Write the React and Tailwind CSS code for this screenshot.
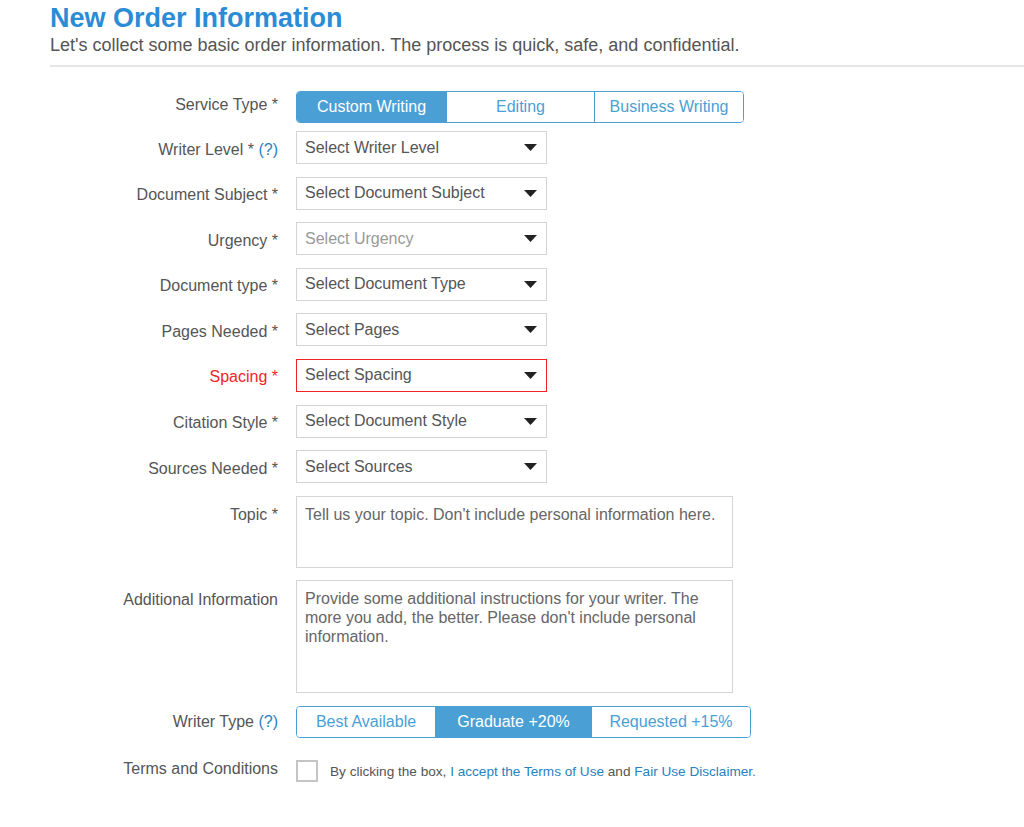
import { useState } from 'react';

const selects = [
  { label: 'Writer Level *', help: true, placeholder: 'Select Writer Level' },
  { label: 'Document Subject *', placeholder: 'Select Document Subject' },
  { label: 'Urgency *', placeholder: 'Select Urgency', muted: true },
  { label: 'Document type *', placeholder: 'Select Document Type' },
  { label: 'Pages Needed *', placeholder: 'Select Pages' },
  { label: 'Spacing *', placeholder: 'Select Spacing', error: true },
  { label: 'Citation Style *', placeholder: 'Select Document Style' },
  { label: 'Sources Needed *', placeholder: 'Select Sources' },
];

function Caret() {
  return (
    <svg width="13" height="7" viewBox="0 0 13 7" className="shrink-0">
      <path d="M0 0 H13 L6.5 7 Z" fill="#222" />
    </svg>
  );
}

function Help() {
  return <span className="text-[#2a7fc0]">(?)</span>;
}

function Row({ label, children, className = '', labelClass = 'items-center' }) {
  return (
    <div className={`flex ${className}`}>
      <div className={`w-[228px] shrink-0 flex justify-end text-right ${labelClass}`}>{label}</div>
      <div className="ml-[18px]">{children}</div>
    </div>
  );
}

function Segmented({ options, active, widths, onChange }) {
  return (
    <div className="flex border border-[#4a9fd5] rounded-[4px] overflow-hidden h-[32px]">
      {options.map((o, i) => (
        <button
          key={o}
          onClick={() => onChange(i)}
          className={`${widths[i]} h-full text-[16px] ${i > 0 ? 'border-l border-[#4a9fd5]' : ''} ${
            active === i ? 'bg-[#4a9fd5] text-white' : 'bg-white text-[#4a9fd5]'
          }`}
        >
          {o}
        </button>
      ))}
    </div>
  );
}

export default function App() {
  const [service, setService] = useState(0);
  const [writer, setWriter] = useState(1);
  const [agreed, setAgreed] = useState(false);

  return (
    <div className="min-h-[827px] bg-white pl-[50px] font-['Liberation_Sans',Arial,sans-serif] text-[16px] text-[#555]">
      {/* Header */}
      <h1 className="pt-[3px] text-[27px] leading-[30px] font-bold text-[#2b8cd6]">New Order Information</h1>
      <p className="mt-[2px] text-[18px] leading-[20px] text-[#555]">
        Let's collect some basic order information. The process is quick, safe, and confidential.
      </p>
      <div className="mt-[10px] h-[2px] bg-[#e6e6e6]" />

      {/* Form */}
      <div className="pt-[24px]">
        <Row label={<span className="-mt-[5px]">Service Type *</span>} className="mb-[8px]">
          <Segmented
            options={['Custom Writing', 'Editing', 'Business Writing']}
            widths={['w-[149px]', 'w-[148px]', 'w-[149px]']}
            active={service}
            onChange={setService}
          />
        </Row>

        {selects.map(s => (
          <Row
            key={s.label}
            className="mb-[12.6px]"
            label={
              <span className={`mt-[4px] ${s.error ? 'text-[#f02424]' : ''}`}>
                {s.label}{s.help && <> <Help /></>}
              </span>
            }
          >
            <div
              className={`w-[251px] h-[33px] flex items-center justify-between pl-2 pr-[9px] border bg-white ${
                s.error ? 'border-[#f02424]' : 'border-[#d4d4d4]'
              }`}
            >
              <span className={s.muted ? 'text-[#999]' : 'text-[#555]'}>{s.placeholder}</span>
              <Caret />
            </div>
          </Row>
        ))}

        <Row label={<span className="pt-[9px] leading-[20px]">Topic *</span>} labelClass="items-start" className="mb-[12px]">
          <div className="w-[437px] h-[72px] border border-[#d4d4d4] pl-2 pr-2 pt-[8px] leading-[19px] text-[#666]">
            Tell us your topic. Don't include personal information here.
          </div>
        </Row>

        <Row label={<span className="pt-[10px] leading-[20px]">Additional Information</span>} labelClass="items-start" className="mb-[13px]">
          <div className="w-[437px] h-[113px] border border-[#d4d4d4] pl-2 pr-6 pt-[8px] leading-[19px] text-[#666]">
            Provide some additional instructions for your writer. The more you add, the better. Please don't include personal information.
          </div>
        </Row>

        <Row label={<span>Writer Type <Help /></span>} className="mb-[22px]">
          <Segmented
            options={['Best Available', 'Graduate +20%', 'Requested +15%']}
            widths={['w-[138px]', 'w-[156px]', 'w-[159px]']}
            active={writer}
            onChange={setWriter}
          />
        </Row>

        <Row label={<span className="-mt-[4px]">Terms and Conditions</span>}>
          <div className="flex items-center">
            <button
              onClick={() => setAgreed(!agreed)}
              className="w-[22px] h-[22px] border-2 border-[#c4c4c4] bg-white flex items-center justify-center text-[#4a9fd5] text-[14px]"
            >
              {agreed ? '✓' : ''}
            </button>
            <p className="ml-[12px] mt-[2px] text-[13.6px] text-[#555]">
              By clicking the box, <span className="text-[#2a7fc0]">I accept the Terms of Use</span> and{' '}
              <span className="text-[#2a7fc0]">Fair Use Disclaimer.</span>
            </p>
          </div>
        </Row>
      </div>
    </div>
  );
}
